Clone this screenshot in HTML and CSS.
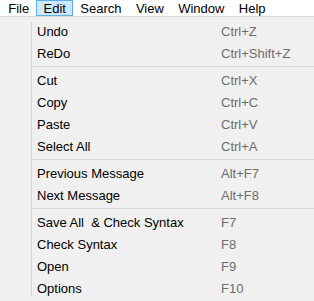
FILE: index.html
```html
<!DOCTYPE html>
<html lang="en">
<head>
    <meta charset="UTF-8">
    <meta name="viewport" content="width=device-width, initial-scale=1.0">
    <title>Edit menu</title>
    <link rel="stylesheet" href="styles.css">
</head>
<body>
    <nav class="menubar">
        <span class="menubar-item">File</span>
        <span class="menubar-item active">Edit</span>
        <span class="menubar-item">Search</span>
        <span class="menubar-item">View</span>
        <span class="menubar-item">Window</span>
        <span class="menubar-item">Help</span>
    </nav>

    <div class="menu">
        <div class="menu-item"><span class="label">Undo</span><span class="key">Ctrl+Z</span></div>
        <div class="menu-item"><span class="label">ReDo</span><span class="key">Ctrl+Shift+Z</span></div>
        <div class="separator"></div>
        <div class="menu-item"><span class="label">Cut</span><span class="key">Ctrl+X</span></div>
        <div class="menu-item"><span class="label">Copy</span><span class="key">Ctrl+C</span></div>
        <div class="menu-item"><span class="label">Paste</span><span class="key">Ctrl+V</span></div>
        <div class="menu-item"><span class="label">Select All</span><span class="key">Ctrl+A</span></div>
        <div class="separator"></div>
        <div class="menu-item"><span class="label">Previous Message</span><span class="key">Alt+F7</span></div>
        <div class="menu-item"><span class="label">Next Message</span><span class="key">Alt+F8</span></div>
        <div class="separator"></div>
        <div class="menu-item"><span class="label">Save All &nbsp;&amp; Check Syntax</span><span class="key">F7</span></div>
        <div class="menu-item"><span class="label">Check Syntax</span><span class="key">F8</span></div>
        <div class="menu-item"><span class="label">Open</span><span class="key">F9</span></div>
        <div class="menu-item"><span class="label">Options</span><span class="key">F10</span></div>
    </div>
</body>
</html>
```

FILE: styles.css
```css
* {
    margin: 0;
    padding: 0;
    box-sizing: border-box;
}

body {
    font-family: 'Liberation Sans', Arial, sans-serif;
    font-size: 13px;
    color: #000;
    background-color: #f0f0f0;
    width: 314px;
    height: 301px;
    overflow: hidden;
}

.menubar {
    display: flex;
    height: 17px;
    padding-left: 1px;
    background: #fff;
    border-bottom: 1px solid #dadada;
}

.menubar-item {
    height: 16px;
    line-height: 16px;
    padding: 0 6.2px;
    border: 1px solid transparent;
}

.menubar-item.active {
    background: #cce8ff;
    border-color: #62ade4;
}

.menu {
    padding-top: 3px;
    background: linear-gradient(#d7d7d7, #d7d7d7) 31px 5px / 1px 274px no-repeat;
}

.menu-item {
    display: flex;
    height: 22px;
    padding: 2px 0 0 37px;
    line-height: 20px;
}

.label {
    width: 184px;
    white-space: nowrap;
}

.key {
    color: #6d6d6d;
    white-space: nowrap;
}

.separator {
    height: 1px;
    margin: 2px 0 2px 32px;
    background: #d7d7d7;
}
```
